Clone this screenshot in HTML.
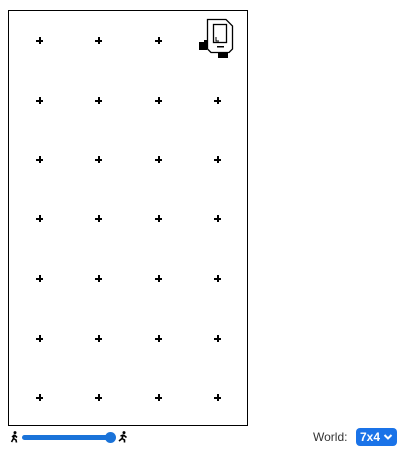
<!DOCTYPE html><html><head><style>
body{margin:0;width:413px;height:468px;background:#fff;position:relative;font-family:"Liberation Sans",sans-serif;overflow:hidden}
.box{position:absolute;left:8px;top:10px;width:238px;height:414px;border:1px solid #000}
.p{position:absolute;width:7px;height:7px}
.p:before{content:"";position:absolute;left:3px;top:0;width:1.5px;height:7px;background:#000}
.p:after{content:"";position:absolute;left:0;top:3px;width:7px;height:1.5px;background:#000}
</style></head><body>
<div class="box"></div>
<div id="g"></div>
<svg style="position:absolute;left:195px;top:15px" width="45" height="48" viewBox="195 15 45 48">
<path d="M207.5 19.5 H226 L232.5 26 V49 L229 52.5 H211 L207.5 49 Z" fill="#fff" stroke="#000" stroke-width="1.3"/>
<rect x="213.5" y="24.5" width="13" height="18" fill="#fff" stroke="#000" stroke-width="1.3"/>
<path d="M216 37 V41 H219" stroke="#000" stroke-width="1" fill="none"/>
<rect x="217" y="46" width="7" height="1.5" fill="#000"/>
<path d="M199 42 H204 V40 H207 V50 H199 Z" fill="#000"/>
<rect x="218" y="53" width="10" height="5" fill="#000"/>
</svg>
<svg style="position:absolute;left:9px;top:431px" width="11" height="12" viewBox="0 0 11 12"><circle cx="6" cy="1.6" r="1.5"/><path d="M5.5 3.5 L4.5 7.5 L2.5 11 M4.5 7.5 L7 9 L7.5 11.5 M5.5 4 L3 6 M5.5 4 L8 6.5" stroke="#000" stroke-width="1.6" fill="none"/></svg>
<div style="position:absolute;left:22px;top:435px;width:90px;height:5px;border-radius:3px;background:#1a73d9"></div>
<div style="position:absolute;left:105px;top:432px;width:11px;height:11px;border-radius:50%;background:#1a73d9"></div>
<svg style="position:absolute;left:117px;top:431px" width="12" height="12" viewBox="0 0 12 12"><circle cx="7" cy="1.6" r="1.5"/><path d="M6.5 3.5 L5 7.5 L2 10 M5 7.5 L7.5 9 L7.5 11.5 M6.5 4 L3.5 5 M6.5 4 L9.5 6.5" stroke="#000" stroke-width="1.6" fill="none"/></svg>
<div style="position:absolute;left:313px;top:430px;font-size:12px;color:#333">World:</div>
<div style="position:absolute;left:356px;top:428px;width:41px;height:18px;border-radius:4px;background:#1a73e8;color:#fff;font-size:12px;font-weight:bold;line-height:18px;padding-left:4px;box-sizing:border-box">7x4<svg style="position:absolute;left:27px;top:5px" width="10" height="8" viewBox="0 0 10 8"><path d="M1.5 2 L5 5.5 L8.5 2" stroke="#fff" stroke-width="2" fill="none"/></svg></div>
<script>
var xs=[39,98,158,217],ys=[40,100,159,218,278,338,397],h="";
ys.forEach(function(y,i){xs.forEach(function(x,j){if(i==0&&j==3)return;h+='<div class="p" style="left:'+(x-3)+'px;top:'+(y-3)+'px"></div>';});});
document.getElementById("g").innerHTML=h;
</script>
</body></html>
